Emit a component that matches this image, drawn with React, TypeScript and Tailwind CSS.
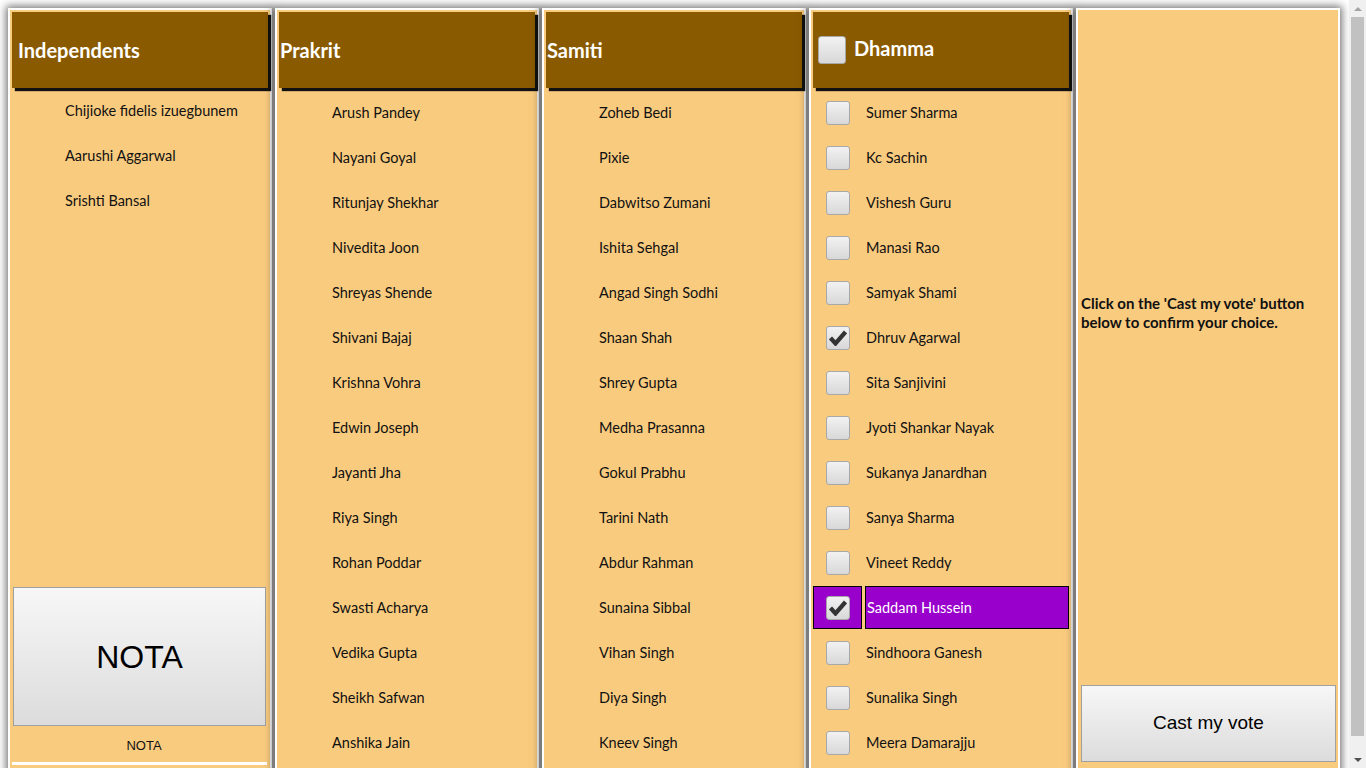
import React from "react";

type Candidate = { name: string; checked?: boolean; selected?: boolean };

const independents = ["Chijioke fidelis izuegbunem", "Aarushi Aggarwal", "Srishti Bansal"];

const prakrit = [
  "Arush Pandey",
  "Nayani Goyal",
  "Ritunjay Shekhar",
  "Nivedita Joon",
  "Shreyas Shende",
  "Shivani Bajaj",
  "Krishna Vohra",
  "Edwin Joseph",
  "Jayanti Jha",
  "Riya Singh",
  "Rohan Poddar",
  "Swasti Acharya",
  "Vedika Gupta",
  "Sheikh Safwan",
  "Anshika Jain",
];

const samiti = [
  "Zoheb Bedi",
  "Pixie",
  "Dabwitso Zumani",
  "Ishita Sehgal",
  "Angad Singh Sodhi",
  "Shaan Shah",
  "Shrey Gupta",
  "Medha Prasanna",
  "Gokul Prabhu",
  "Tarini Nath",
  "Abdur Rahman",
  "Sunaina Sibbal",
  "Vihan Singh",
  "Diya Singh",
  "Kneev Singh",
];

const dhamma: Candidate[] = [
  { name: "Sumer Sharma" },
  { name: "Kc Sachin" },
  { name: "Vishesh Guru" },
  { name: "Manasi Rao" },
  { name: "Samyak Shami" },
  { name: "Dhruv Agarwal", checked: true },
  { name: "Sita Sanjivini" },
  { name: "Jyoti Shankar Nayak" },
  { name: "Sukanya Janardhan" },
  { name: "Sanya Sharma" },
  { name: "Vineet Reddy" },
  { name: "Saddam Hussein", checked: true, selected: true },
  { name: "Sindhoora Ganesh" },
  { name: "Sunalika Singh" },
  { name: "Meera Damarajju" },
];

function CheckBox({ checked, big }: { checked?: boolean; big?: boolean }) {
  return (
    <div
      className={`flex items-center justify-center rounded-[3px] border border-[#a8a8a8] bg-gradient-to-b from-[#f2f2f2] to-[#d8d8d8] ${
        big ? "h-[28px] w-[28px]" : "h-[24px] w-[24px]"
      }`}
    >
      {checked && (
        <svg width="18" height="16" viewBox="0 0 18 16">
          <path d="M1.5 8 L6.5 13.5 L16.5 2" fill="none" stroke="#333" strokeWidth="4.2" strokeLinejoin="miter" />
        </svg>
      )}
    </div>
  );
}

function Header({ title, pl, box }: { title: string; pl: string; box?: boolean }) {
  return (
    <div
      className={`flex h-[76px] shrink-0 items-center bg-[#8a5a00] text-[20px] font-bold text-white shadow-[3px_3px_1px_#111] ${pl}`}
    >
      {box && (
        <div className="mr-[8px]">
          <CheckBox big />
        </div>
      )}
      <span className={box ? "pb-[5px]" : ""}>{title}</span>
    </div>
  );
}

function Row({ c, withBox }: { c: Candidate; withBox?: boolean }) {
  return (
    <div className="mb-[2px] flex h-[43px] gap-[3px]">
      <div
        className={`flex w-[49px] shrink-0 items-center justify-center ${
          c.selected ? "border border-black bg-[#9900cc]" : ""
        }`}
      >
        {withBox && <CheckBox checked={c.checked} />}
      </div>
      <div
        className={`flex flex-1 items-center pl-[1px] text-[14.5px] ${
          c.selected ? "border border-black bg-[#9900cc] pl-0 text-white" : "text-[#111]"
        }`}
      >
        {c.name}
      </div>
    </div>
  );
}

function ScrollBar() {
  return (
    <div className="flex h-screen w-[17px] shrink-0 flex-col bg-[#f0f0f0]">
      <div className="flex h-[17px] items-center justify-center">
        <div className="h-0 w-0 border-x-[4px] border-b-[4px] border-x-transparent border-b-[#a3a3a3]" />
      </div>
      <div className="mx-[2px] h-[719px] bg-[#c1c1c1]" />
      <div className="flex-1" />
      <div className="flex h-[17px] items-center justify-center">
        <div className="h-0 w-0 border-x-[4px] border-t-[4px] border-x-transparent border-t-[#505050]" />
      </div>
    </div>
  );
}

const panel =
  "flex h-[774px] w-[264px] shrink-0 flex-col border-2 border-white bg-[#f9cb7f] shadow-[0_0_8px_2px_rgba(0,0,0,0.55)]";

export default function App() {
  return (
    <div className="flex h-screen w-full overflow-hidden bg-white font-['Lato','Open_Sans',sans-serif]">
      <div className="flex h-[786px] flex-1 gap-[3px] pl-[8px] pt-[8px]">
        {/* Independents */}
        <div className={`${panel} p-[2px]`}>
          <Header title="Independents" pl="pl-[6px]" />
          <div className="mt-[1px]">
            {independents.map((n) => (
              <Row key={n} c={{ name: n }} />
            ))}
          </div>
          <div className="flex-1" />
          <button className="ml-[1px] h-[139px] w-[253px] border border-[#a0a0a0] bg-gradient-to-b from-[#f7f7f7] to-[#dcdcdc] font-['Liberation_Sans',Arial,sans-serif] text-[32px] text-black">
            NOTA
          </button>
          <div className="mt-[11px] h-[18px] pl-[8px] text-center font-['Liberation_Sans',Arial,sans-serif] text-[13px] leading-[18px] text-[#111]">
            NOTA
          </div>
          <div className="mt-[7px] mr-[1px] h-[3px] bg-white" />
          <div className="h-[13px]" />
        </div>

        {/* Prakrit */}
        <div className={`${panel} p-[2px]`}>
          <Header title="Prakrit" pl="pl-[1px]" />
          <div className="mt-[3px]">
            {prakrit.map((n) => (
              <Row key={n} c={{ name: n }} />
            ))}
          </div>
        </div>

        {/* Samiti */}
        <div className={`${panel} p-[2px]`}>
          <Header title="Samiti" pl="pl-[1px]" />
          <div className="mt-[3px]">
            {samiti.map((n) => (
              <Row key={n} c={{ name: n }} />
            ))}
          </div>
        </div>

        {/* Dhamma */}
        <div className={`${panel} p-[2px]`}>
          <Header title="Dhamma" pl="pl-[5px]" box />
          <div className="mt-[3px]">
            {dhamma.map((c) => (
              <Row key={c.name} c={c} withBox />
            ))}
          </div>
        </div>

        {/* Confirm */}
        <div className={panel}>
          <div className="mt-[284px] pl-[3px] text-[15px] font-bold leading-[19px] text-[#111]">
            Click on the 'Cast my vote' button
            <br />
            below to confirm your choice.
          </div>
          <div className="flex-1" />
          <button className="mb-[18px] ml-[3px] h-[77px] w-[255px] border border-[#a0a0a0] bg-gradient-to-b from-[#f7f7f7] to-[#dcdcdc] font-['Liberation_Sans',Arial,sans-serif] text-[19px] text-black">
            Cast my vote
          </button>
        </div>
      </div>
      <ScrollBar />
    </div>
  );
}
